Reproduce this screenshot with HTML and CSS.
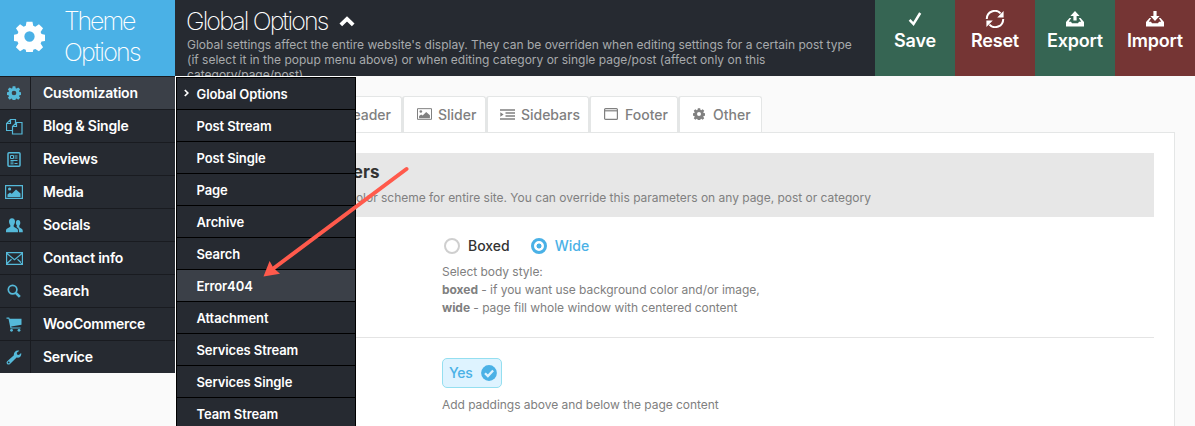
FILE: index.html
```html
<!DOCTYPE html>
<html lang="en">
<head>
<meta charset="utf-8">
<title>Theme Options</title>
<link rel="stylesheet" href="styles.css">
</head>
<body>
<svg class="defs" width="0" height="0" aria-hidden="true">
  <symbol id="gear" viewBox="0 0 24 24"><path fill="currentColor" fill-rule="evenodd" d="M9.7.5h4.6l.6 3.2 1.6.7 2.8-1.900 3.200 3.200-1.900 2.800.7 1.600 3.200.6v4.600l-3.200.6-.7 1.600 1.900 2.800-3.200 3.200-2.800-1.900-1.600.7-.6 3.200H9.700l-.6-3.200-1.600-.7-2.800 1.900-3.200-3.200 1.900-2.800-.7-1.600-3.200-.6v-4.600l3.200-.6.7-1.600L1.500 5.700l3.200-3.200 2.800 1.900 1.600-.7zM12 8a4 4 0 1 0 0 8 4 4 0 0 0 0-8z"/></symbol>
  <symbol id="image" viewBox="0 0 18 14"><path fill="none" stroke="currentColor" stroke-width="1.200" d="M.6.6h16.800v12.800H.6z"/><path fill="currentColor" d="M2.500 12V9.500L5 7.500l1.800 1.300L11 4.500l4.500 4V12z"/><circle cx="4.600" cy="4" r="1.600" fill="currentColor"/></symbol>
</svg>
<header class="header">
  <div class="brand">
    <svg class="brand-icon" width="31" height="31"><use href="#gear"/></svg>
    <div class="brand-name"><span class="tight">Theme</span><span>Options</span></div>
  </div>
  <div class="intro">
    <h1 class="title"><span>Global Options</span><svg width="16" height="11" viewBox="0 0 16 11"><path d="M1.800 8.800l6.200-6 6.200 6" fill="none" stroke="#fff" stroke-width="3.800"/></svg></h1>
    <p class="desc">Global settings affect the entire website's display. They can be overriden when editing settings for a certain post type<br>(if select it in the popup menu above) or when editing category or single page/post (affect only on this<br>category/page/post)</p>
  </div>
  <div class="actions">
    <div class="action green"><svg width="20" height="18" viewBox="0 0 20 18"><path d="M4.600 9.800l3.900 4.200 6.700-11" fill="none" stroke="#fff" stroke-width="2.500"/></svg><span>Save</span></div>
    <div class="action red"><svg width="20" height="18" viewBox="0 0 20 18"><path d="M1.800 9A8 8 0 0 1 15.600 3.400M18.200 9A8 8 0 0 1 4.400 14.600" fill="none" stroke="#fff" stroke-width="2"/><path d="M18.600 1v6.400h-6.400zM1.400 17v-6.400h6.400z" fill="#fff"/></svg><span>Reset</span></div>
    <div class="action green"><svg width="20" height="18" viewBox="0 0 20 18"><path d="M10 1L5.400 6h3v4.500h3.200V6h3zM4.500 8L1 12v4.600h18V12l-3.500-4h-1.700l2.400 3.700H14l-1 1.600H7l-1-1.600H3.800L6.200 8z" fill="#fff"/></svg><span>Export</span></div>
    <div class="action red"><svg width="20" height="18" viewBox="0 0 20 18"><path d="M10 11L5.400 6h3V1h3.200v5h3zM4.500 8L1 12v4.600h18V12l-3.500-4h-1.700l2.400 3.700H14l-1 1.600H7l-1-1.600H3.800L6.200 8z" fill="#fff"/></svg><span>Import</span></div>
  </div>
</header>
<div class="body">
  <nav class="sidebar">
    <a class="item active"><i><svg width="14" height="14"><use href="#gear"/></svg></i><span>Customization</span></a>
    <a class="item"><i><svg width="17" height="17" viewBox="0 0 17 17"><path d="M6.500 12.500H.5V5.500L4.500 1.500H9.500V5M4.500 1.500V5.500H.5M6.500 8.500L10.500 4.500H16V16H6.500zM10.500 4.500V8.500H6.500" fill="none" stroke="currentColor" stroke-width="1.200"/></svg></i><span>Blog &amp; Single</span></a>
    <a class="item"><i><svg width="14" height="15" viewBox="0 0 14 15"><rect x="1" y=".8" width="12" height="13.400" rx="1" fill="none" stroke="currentColor" stroke-width="1.500"/><path d="M3.500 3.500h3v3h-3zM7.500 4h3M7.500 6h3M3.500 8.500h7M3.500 10h3M7.500 11.500h3M3.500 11.800h3" fill="none" stroke="currentColor"/></svg></i><span>Reviews</span></a>
    <a class="item"><i><svg width="18" height="14"><use href="#image"/></svg></i><span>Media</span></a>
    <a class="item"><i><svg width="17" height="15" viewBox="0 0 17 15"><path fill="currentColor" d="M6 .3c2 0 3 1.400 3 3.200 0 1.600-.6 2.700-1.300 3.600v1.600l3.500 2c.7.400.8 1.300.8 3.500H0c0-2.200.1-3.100.8-3.500l3.500-2V7.100C3.600 6.200 3 5.100 3 3.500 3 1.700 4 .3 6 .3zM12 2c1.600 0 2.300 1.200 2.300 2.700 0 1.300-.4 2.100-1 2.800v1.700l2.700 1.700c.6.400.8 1.400.8 3.300H13c0-2.500-.3-3.700-1.200-4.300L10.200 8.800l.7-.4v-.9c-.6-.7-1-1.500-1-2.800C9.900 3.200 10.500 2 12 2z"/></svg></i><span>Socials</span></a>
    <a class="item"><i><svg width="17" height="13" viewBox="0 0 17 13"><path d="M.6.6h15.800v11.800H.6zM1 1.500l7.500 6.200L16 1.500M1 11.500l4.500-4.200M16 11.500l-4.500-4.200" fill="none" stroke="currentColor" stroke-width="1.200"/></svg></i><span>Contact info</span></a>
    <a class="item"><i><svg width="14" height="14" viewBox="0 0 14 14"><circle cx="5.600" cy="5.600" r="4.300" fill="none" stroke="currentColor" stroke-width="1.700"/><path d="M8.800 8.800l4 4" stroke="currentColor" stroke-width="2.600"/></svg></i><span>Search</span></a>
    <a class="item"><i><svg width="16" height="15" viewBox="0 0 16 15"><path fill="currentColor" d="M.5.500h2.700l.5 1.300H15.500v6L5.200 9.400l.3 1.200H14.500v1H4.500L2.500 1.700h-2z"/><circle cx="5.500" cy="13.300" r="1.400" fill="currentColor"/><circle cx="13" cy="13.300" r="1.400" fill="currentColor"/></svg></i><span>WooCommerce</span></a>
    <a class="item"><i><svg width="16" height="15" viewBox="0 0 16 15"><path fill="currentColor" fill-rule="evenodd" d="M13.300.7L10.800 2.800l.2 1.800 1.900.4 2.200-1.900c.8 2.500-1.400 5.300-4.500 4.500L4 13.900c-.9.900-2.200.7-2.900 0-.7-.7-.8-1.900.1-2.700L7.900 5.200C7.300 2 10.400-.4 13.300.7zM2.700 11.500a.9.900 0 1 0 0 1.800.9.900 0 0 0 0-1.800z"/></svg></i><span>Service</span></a>
  </nav>
  <main class="main">
    <div class="tabs">
      <div class="tab first"><span>Header</span></div>
      <div class="tab slider"><svg width="15" height="12"><use href="#image"/></svg><span>Slider</span></div>
      <div class="tab sidebars"><svg width="15" height="11" viewBox="0 0 15 11"><path d="M0 1h15M5.500 4h9.500M5.500 7h9.500M0 10h15" stroke="currentColor" stroke-width="1.600"/><path d="M.3 3.200L3.600 5.500.3 7.800z" fill="currentColor"/></svg><span>Sidebars</span></div>
      <div class="tab footer"><svg width="14" height="12" viewBox="0 0 14 12"><rect x=".6" y=".6" width="12.800" height="10.800" rx="1" fill="none" stroke="currentColor" stroke-width="1.200"/><path d="M1 2.800h12" stroke="currentColor" stroke-width="1.200"/></svg><span>Footer</span></div>
      <div class="tab other"><svg width="12" height="12"><use href="#gear"/></svg><span>Other</span></div>
    </div>
    <section class="panel">
      <div class="section-head">
        <h2>Body parameters</h2>
        <p>Select body style &amp; color scheme for entire site. You can override this parameters on any page, post or category</p>
      </div>
      <div class="field">
        <div class="radios">
          <span class="radio"></span><span class="opt">Boxed</span>
          <span class="radio on"></span><span class="opt on">Wide</span>
        </div>
        <p class="hint">Select body style:<br><b>boxed</b> - if you want use background color and/or image,<br><b>wide</b> - page fill whole window with centered content</p>
      </div>
      <div class="field last">
        <div class="switch"><span>Yes</span><svg width="16" height="16" viewBox="0 0 16 16"><circle cx="8" cy="8" r="7.900" fill="#4ab1e6"/><path d="M4 8.200l2.900 2.900 5.200-5.600" fill="none" stroke="#def3ff" stroke-width="2.300"/></svg></div>
        <p class="hint">Add paddings above and below the page content</p>
      </div>
    </section>
  </main>
  <div class="popup">
    <a class="entry"><svg class="mark" width="5" height="8" viewBox="0 0 5 8"><path d="M.8 1l3 3-3 3" fill="none" stroke="#fff" stroke-width="1.700"/></svg><span>Global Options</span></a>
    <a class="entry">Post Stream</a>
    <a class="entry">Post Single</a>
    <a class="entry">Page</a>
    <a class="entry">Archive</a>
    <a class="entry">Search</a>
    <a class="entry hover">Error404</a>
    <a class="entry">Attachment</a>
    <a class="entry">Services Stream</a>
    <a class="entry">Services Single</a>
    <a class="entry">Team Stream</a>
  </div>
  <svg class="arrow" width="150" height="116" viewBox="0 0 150 116"><path d="M146.500 5L14 104" stroke="#ff5a4c" stroke-width="4" stroke-linecap="round"/><path d="M3.500 112.500L9.600 97l3.900 7 6.500 5.800z" fill="#ff5a4c"/></svg>
</div>
</body>
</html>
```
FILE: styles.css
```css
* { box-sizing: border-box; }
body { margin: 0; width: 1195px; height: 426px; overflow: hidden; background: #fafafa; font-family: Inter, "Liberation Sans", sans-serif; color: #808080; }
h1, h2, p { margin: 0; font-weight: normal; }
svg { display: block; flex: none; }
.defs { position: absolute; }
.header { display: flex; height: 76px; background: #262a31; color: #fff; }
.brand { display: flex; width: 175px; background: #4ab1e6; padding: 6px 0 0 14px; }
.brand-icon { margin-top: 15px; }
.brand-name { display: flex; flex-direction: column; align-items: flex-start; margin-left: 19px; font-size: 25px; line-height: 31px; font-weight: 250; letter-spacing: -1.7px; }
.tight { letter-spacing: -2.1px; }
.intro { width: 700px; height: 76px; overflow: hidden; padding: 5px 0 0 12px; white-space: nowrap; }
.title { display: flex; align-items: center; gap: 12px; margin-left: -1px; font-size: 25px; line-height: 32px; font-weight: 250; letter-spacing: -1.88px; }
.desc { color: #a8aaad; font-size: 12px; line-height: 15px; }
.actions { display: flex; }
.action { width: 80px; display: flex; flex-direction: column; align-items: center; padding-top: 10px; font-size: 18px; line-height: 26px; font-weight: 600; letter-spacing: -0.2px; }
.green { background: #366553; }
.red { background: #753534; }
.body { position: relative; display: flex; height: 350px; overflow: hidden; }
.sidebar { width: 175px; height: 297px; background: #262a31; }
.item { display: flex; height: 33px; border-top: 1px solid #191b20; color: #fff; font-size: 14px; font-weight: 600; line-height: 32px; letter-spacing: -0.24px; }
.item i { display: flex; align-items: center; justify-content: center; width: 31px; padding-right: 2px; border-right: 1px solid #191b20; color: #55b9d9; }
.item span { padding-left: 12px; }
.active { background: #3b4048; }
.main { width: 979px; margin-left: 21px; padding-top: 20px; white-space: nowrap; }
.tabs { display: flex; height: 37px; padding-left: 100px; }
.tab { position: relative; display: flex; align-items: center; height: 36px; border: 1px solid #e4e6e6; border-bottom: 0; border-left-width: 2px; border-radius: 3px 3px 0 0; background: #fff; padding-bottom: 1px; font-size: 14px; font-weight: 500; }
.first { width: 106px; justify-content: flex-end; padding-right: 10px; }
.slider { width: 84px; padding-left: 13px; gap: 6px; }
.sidebars { width: 103px; padding-left: 12px; gap: 6px; letter-spacing: -0.03px; }
.footer { width: 89px; padding-left: 13px; gap: 7px; }
.other { width: 84px; padding-left: 13px; gap: 8px; }
.panel { height: 300px; margin-top: -1px; border: 1px solid #e4e6e6; background: #fff; padding: 20px 20px 0; }
.section-head { height: 64px; background: #e7e7e7; padding: 7px 0 0 20px; }
.section-head h2 { color: #333; font-size: 17px; line-height: 24px; font-weight: 700; }
.section-head p { font-size: 12px; line-height: 28px; letter-spacing: -0.02px; }
.field { height: 121px; padding: 18px 0 0 225px; border-bottom: 1px solid #e4e4e4; }
.last { border-bottom: 0; padding-top: 20px; }
.radios { display: flex; align-items: center; height: 20px; padding-left: 2px; }
.radio { width: 16px; height: 16px; margin-top: 1px; border: 2px solid #cfcfcf; border-radius: 50%; background: #fff; }
.radio.on { margin-left: 21px; border: 3px solid #4ab1e6; background: radial-gradient(circle, #4ab1e6 2.2px, #fff 2.8px); }
.opt { margin-left: 8px; color: #333; font-size: 14px; font-weight: 500; }
.opt.on { color: #4ab1e6; }
.hint { margin-top: 8px; font-size: 12px; line-height: 18px; letter-spacing: -0.04px; }
.switch { display: flex; align-items: center; gap: 9px; width: 60px; height: 30px; border: 1px solid #94dff0; border-radius: 5px; background: #def3ff; padding: 0 0 1px 6px; color: #4ab1e6; font-size: 14px; font-weight: 500; letter-spacing: -0.3px; }
.popup { position: absolute; left: 175px; top: 0; width: 181px; height: 360px; border-left: 1px solid #fff; border-top: 1px solid #fff; background: #000; }
.entry { display: flex; align-items: center; position: relative; height: 31px; margin: 1px 1px 0; background: #262a31; color: #fff; font-size: 13px; font-weight: 600; padding-left: 19.5px; letter-spacing: -0.1px; }
.mark { position: absolute; left: 7px; top: 11px; }
.hover { background: #3b4048; }
.arrow { position: absolute; left: 260px; top: 88px; }
```
